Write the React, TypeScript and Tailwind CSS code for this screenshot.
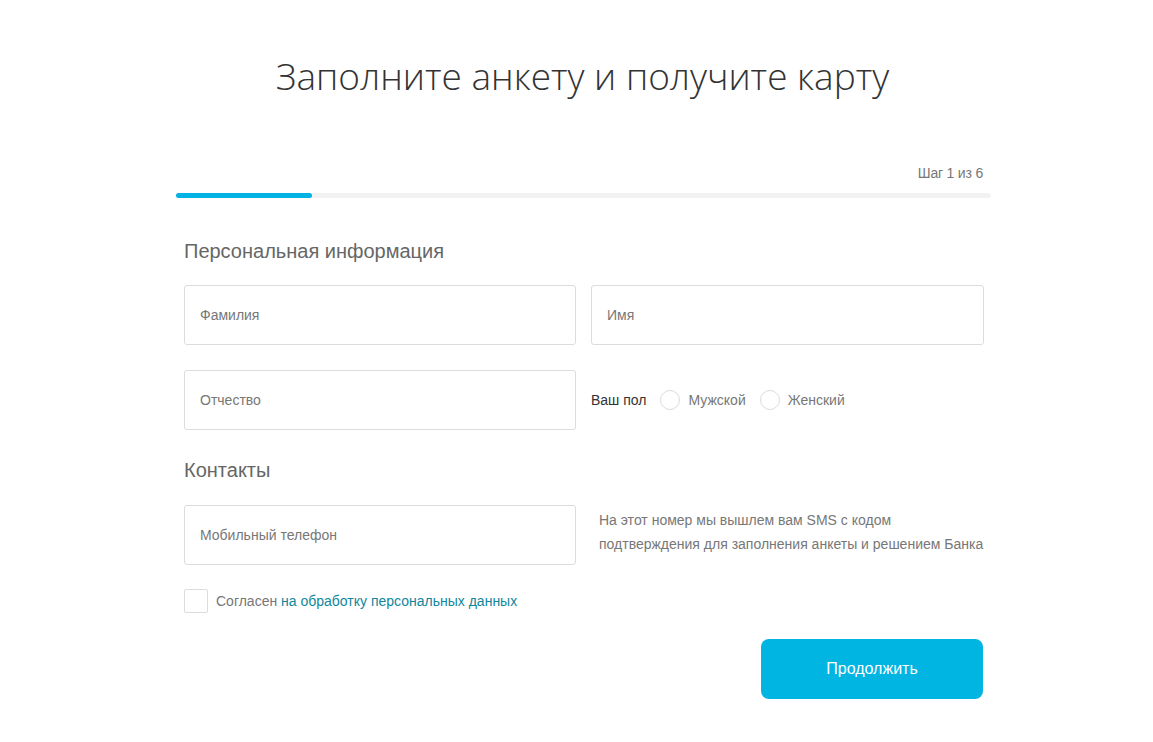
import React from "react";

function Field({ label }: { label: string }) {
  return (
    <div className="h-[60px] border border-[#dcdcdc] rounded-[3px] flex items-center px-[15px] text-[14px] text-[#777]">
      {label}
    </div>
  );
}

function Radio({ label }: { label: string }) {
  return (
    <div className="flex items-center gap-[8px]">
      <span className="w-[20px] h-[20px] rounded-full border border-[#dcdcdc] bg-white" />
      <span className="text-[14px] text-[#777]">{label}</span>
    </div>
  );
}

export default function App() {
  return (
    <div className="w-[1153px] h-[742px] bg-white" style={{ fontFamily: '"Liberation Sans", Arial, sans-serif' }}>
      <h1
        className="pt-[50px] pl-[12px] text-center text-[37px] leading-[52px] font-light text-[#333]"
        style={{ fontFamily: '"Open Sans", sans-serif' }}
      >
        Заполните анкету и получите карту
      </h1>
      <div className="w-[815px] ml-[176px] mt-[63px]">
        <div className="flex justify-end pr-[8px] text-[14px] text-[#777] leading-[16px] tracking-[-0.2px]">Шаг 1 из 6</div>
        <div className="mt-[12px] h-[5px] rounded-full bg-[#f2f2f2]">
          <div className="h-[5px] w-[136px] rounded-full bg-[#00b3e3]" />
        </div>
      </div>
      <div className="w-[800px] ml-[184px]">
        <h2 className="mt-[39px] text-[20px] leading-[28px] text-[#666]">Персональная информация</h2>
        <div className="mt-[20px] grid grid-cols-[392px_393px] gap-x-[15px] gap-y-[25px]">
          <Field label="Фамилия" />
          <Field label="Имя" />
          <Field label="Отчество" />
          <div className="flex items-center gap-[14px]">
            <span className="text-[14px] text-[#333]">Ваш пол</span>
            <Radio label="Мужской" />
            <Radio label="Женский" />
          </div>
        </div>
        <h2 className="mt-[26px] text-[20px] leading-[28px] text-[#666]">Контакты</h2>
        <div className="mt-[21px] grid grid-cols-[392px_393px] gap-x-[15px]">
          <Field label="Мобильный телефон" />
          <p className="pl-[8px] pt-[3px] text-[14px] leading-[24px] text-[#777]">
            На этот номер мы вышлем вам SMS с кодом подтверждения для заполнения анкеты и решением Банка
          </p>
        </div>
        <div className="mt-[24px] flex items-center gap-[8px]">
          <span className="w-[24px] h-[24px] border border-[#dcdcdc] rounded-[2px]" />
          <span className="text-[14px] text-[#777]">
            Согласен <span className="text-[#10879d]">на обработку персональных данных</span>
          </span>
        </div>
        <div className="mt-[26px] flex justify-end pr-[1px]">
          <button className="w-[222px] h-[60px] rounded-[8px] bg-[#00b5e2] text-white text-[16px]">Продолжить</button>
        </div>
      </div>
    </div>
  );
}
